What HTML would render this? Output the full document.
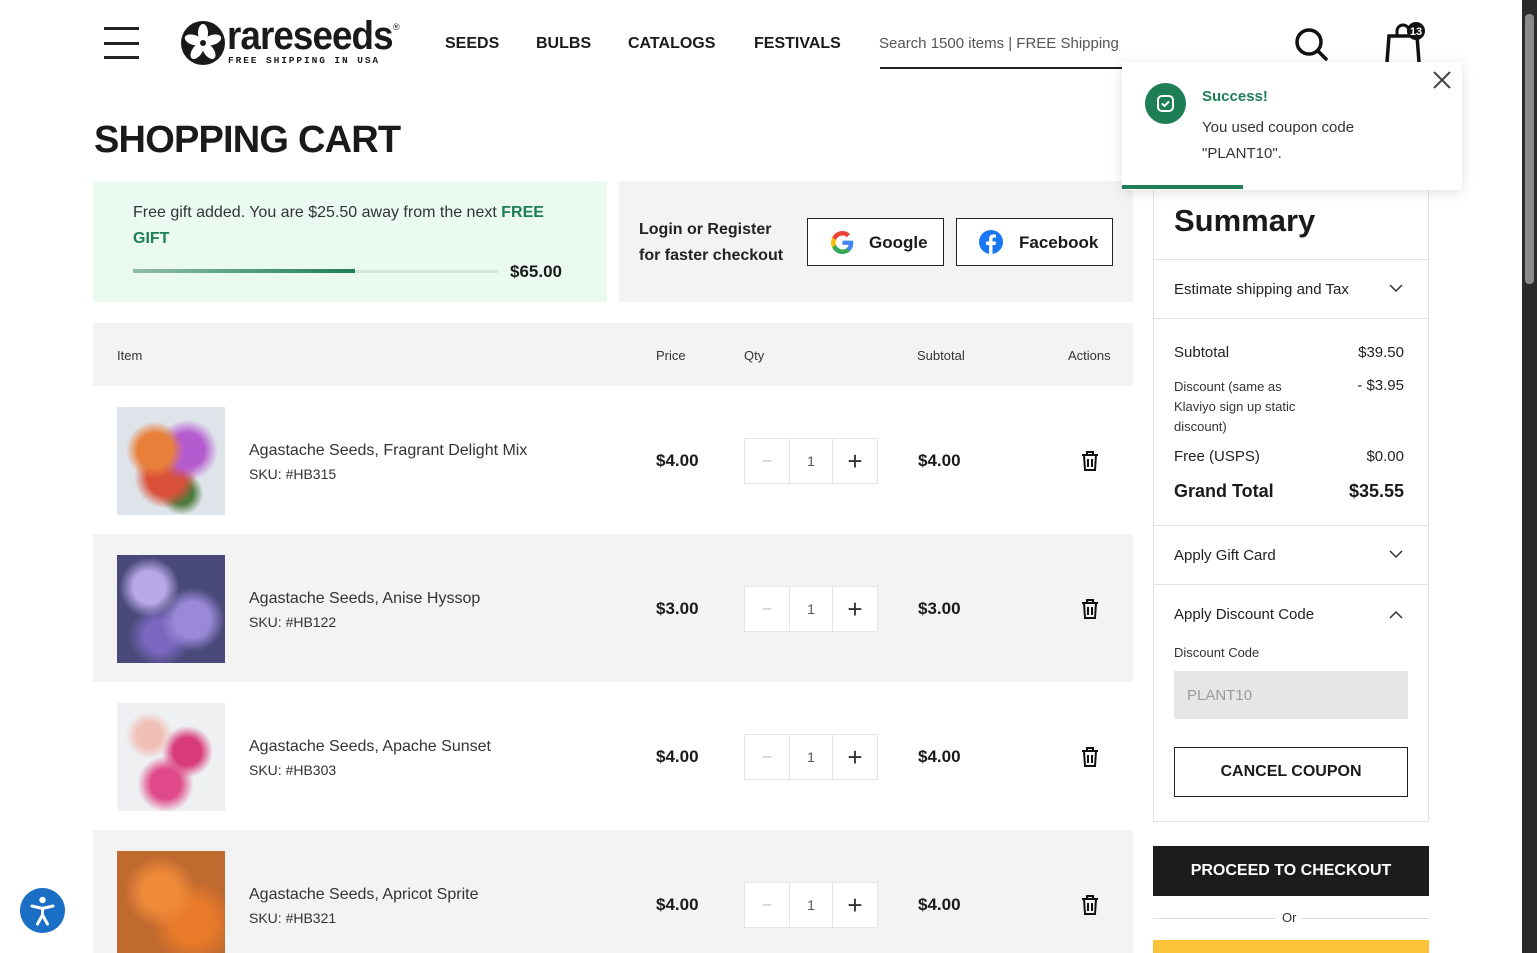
<!DOCTYPE html>
<html><head><meta charset="utf-8">
<style>
*{box-sizing:border-box;margin:0;padding:0}
body{width:1537px;height:953px;overflow:hidden;background:#fff;font-family:"Liberation Sans",sans-serif;color:#1a1a1a;position:relative}
.a{position:absolute}
.nav{font-size:16px;font-weight:bold;letter-spacing:0;top:35px}
.th{font-size:13px;color:#333;top:348px}
.row{position:absolute;left:93px;width:1040px;height:148px}
.img{position:absolute;left:24px;top:21px;width:108px;height:108px}
.name{position:absolute;left:156px;top:56px;font-size:16px;color:#333}
.sku{position:absolute;left:156px;top:80px;font-size:14px;color:#333}
.pr{position:absolute;top:65px;font-size:17px;font-weight:bold}
.qty{position:absolute;left:651px;top:52px;width:134px;height:46px;border:1px solid #e4e4e4;display:flex}
.qty div{border-right:1px solid #e4e4e4;display:flex;align-items:center;justify-content:center;color:#bbb}
.qty div:last-child{border:none;color:#333;font-size:26px;font-weight:300}
.trash{position:absolute;left:987px;top:64px}
.sl{font-size:15px;color:#222}
.sr{font-size:15px;color:#222;right:133px}
.hr{position:absolute;left:1154px;width:274px;height:1px;background:#e2e2e2}
</style></head><body>
<div class="a" style="left:104px;top:27px;width:35px;height:3px;background:#222"></div>
<div class="a" style="left:104px;top:42px;width:35px;height:3px;background:#222"></div>
<div class="a" style="left:104px;top:56px;width:35px;height:3px;background:#222"></div>
<svg class="a" style="left:181px;top:21px" width="44" height="44" viewBox="0 0 44 44"><circle cx="22" cy="22" r="22" fill="#1a1a1a"/><g fill="#fff"><ellipse cx="22" cy="12" rx="5" ry="9"/><ellipse cx="22" cy="12" rx="5" ry="9" transform="rotate(72 22 22)"/><ellipse cx="22" cy="12" rx="5" ry="9" transform="rotate(144 22 22)"/><ellipse cx="22" cy="12" rx="5" ry="9" transform="rotate(216 22 22)"/><ellipse cx="22" cy="12" rx="5" ry="9" transform="rotate(288 22 22)"/></g><circle cx="22" cy="22" r="3" fill="#1a1a1a"/></svg>
<div class="a" style="left:227px;top:14px;font-size:40px;font-weight:bold;letter-spacing:-1px;transform:scaleX(.92);transform-origin:left;color:#1a1a1a">rareseeds</div>
<div class="a" style="left:393px;top:22px;font-size:9px">®</div>
<div class="a" style="left:228px;top:55px;font-size:9.5px;font-weight:bold;letter-spacing:1.9px;font-family:'Liberation Mono',monospace">FREE SHIPPING IN USA</div>
<div class="a nav" style="left:445px">SEEDS</div>
<div class="a nav" style="left:536px">BULBS</div>
<div class="a nav" style="left:628px">CATALOGS</div>
<div class="a nav" style="left:754px">FESTIVALS</div>
<div class="a" style="left:879px;top:35px;font-size:15px;color:#555">Search 1500 items | FREE Shipping</div>
<div class="a" style="left:880px;top:67px;width:242px;height:2px;background:#222"></div>
<svg class="a" style="left:1293px;top:26px" width="36" height="36" viewBox="0 0 36 36"><circle cx="16" cy="16" r="12" fill="none" stroke="#111" stroke-width="3.5"/><path d="M25 25l8 8" stroke="#111" stroke-width="3.5" stroke-linecap="round"/></svg>
<svg class="a" style="left:1383px;top:20px" width="46" height="44" viewBox="0 0 46 44"><path d="M4 42 L6 16 H34 L36 42" fill="none" stroke="#111" stroke-width="3.5"/><path d="M14 16 V11 a6 6 0 0 1 12 0 V16" fill="none" stroke="#111" stroke-width="3"/><circle cx="33" cy="11" r="9" fill="#111"/><text x="33" y="15" font-size="11" font-weight="bold" fill="#fff" text-anchor="middle" font-family="Liberation Sans">13</text></svg>
<div class="a" style="left:94px;top:119px;font-size:38px;font-weight:bold;letter-spacing:-.8px">SHOPPING CART</div>
<div class="a" style="left:93px;top:181px;width:514px;height:121px;background:#eafaf0"></div>
<div class="a" style="left:133px;top:200px;width:440px;font-size:16px;line-height:26px;color:#333">Free gift added. You are $25.50 away from the next <b style="color:#1e7e55">FREE GIFT</b></div>
<div class="a" style="left:133px;top:270px;width:365px;height:3px;background:#d6e6dc"></div>
<div class="a" style="left:133px;top:269px;width:222px;height:4px;background:linear-gradient(90deg,#8fbfa8,#1e7e55)"></div>
<div class="a" style="left:510px;top:262px;font-size:17px;font-weight:bold">$65.00</div>
<div class="a" style="left:619px;top:181px;width:514px;height:121px;background:#f3f3f3"></div>
<div class="a" style="left:639px;top:217px;font-size:16px;font-weight:bold;line-height:26px;color:#222">Login or Register<br>for faster checkout</div>
<div class="a" style="left:807px;top:218px;width:137px;height:48px;border:1.5px solid #222;background:#fff"></div>
<svg class="a" style="left:831px;top:231px" width="23" height="23" viewBox="0 0 48 48"><path fill="#EA4335" d="M24 9.5c3.5 0 6.6 1.2 9 3.5l6.7-6.7C35.6 2.4 30.2 0 24 0 14.6 0 6.6 5.4 2.6 13.2l7.8 6C12.3 13.4 17.7 9.5 24 9.5z"/><path fill="#4285F4" d="M46.5 24.5c0-1.6-.1-3.1-.4-4.5H24v9h12.7c-.6 3-2.3 5.5-4.8 7.2l7.6 5.9c4.4-4.1 7-10.1 7-17.6z"/><path fill="#FBBC05" d="M10.4 28.8c-.5-1.5-.8-3.1-.8-4.8s.3-3.3.8-4.8l-7.8-6C.9 16.5 0 20.1 0 24s.9 7.5 2.6 10.8l7.8-6z"/><path fill="#34A853" d="M24 48c6.5 0 11.9-2.1 15.9-5.9l-7.6-5.9c-2.2 1.5-5 2.3-8.3 2.3-6.3 0-11.7-4.2-13.6-10l-7.8 6C6.6 42.6 14.6 48 24 48z"/></svg>
<div class="a" style="left:869px;top:233px;font-size:17px;font-weight:bold">Google</div>
<div class="a" style="left:956px;top:218px;width:157px;height:48px;border:1.5px solid #222;background:#fff"></div>
<svg class="a" style="left:979px;top:230px" width="24" height="24" viewBox="0 0 24 24"><circle cx="12" cy="12" r="12" fill="#1877F2"/><path d="M13.5 24V15h3l.5-3.5h-3.5V9.3c0-1 .3-1.7 1.8-1.7H17V4.5c-.3 0-1.4-.1-2.6-.1-2.6 0-4.3 1.6-4.3 4.4v2.7H7V15h3.1v9z" fill="#fff"/></svg>
<div class="a" style="left:1019px;top:233px;font-size:17px;font-weight:bold">Facebook</div>
<div class="a" style="left:93px;top:323px;width:1040px;height:63px;background:#f3f3f3"></div>
<div class="a th" style="left:117px">Item</div>
<div class="a th" style="left:656px">Price</div>
<div class="a th" style="left:744px">Qty</div>
<div class="a th" style="left:917px">Subtotal</div>
<div class="a th" style="left:1068px">Actions</div>
<div class="row" style="top:386px;background:#fff">
<div class="img" style="background:radial-gradient(circle at 35% 40%,#e8803a 0 18%,transparent 30%),radial-gradient(circle at 65% 40%,#b55bd0 0 18%,transparent 32%),radial-gradient(circle at 45% 65%,#d9503a 0 20%,transparent 34%),radial-gradient(circle at 60% 80%,#4a7a3a 0 10%,transparent 20%),#dfe3ea"></div>
<div class="name">Agastache Seeds, Fragrant Delight Mix</div><div class="sku">SKU: #HB315</div>
<div class="pr" style="left:563px">$4.00</div>
<div class="qty"><div style="width:45px">–</div><div style="width:43px;color:#555;font-size:14px">1</div><div style="width:44px">+</div></div>
<div class="pr" style="left:825px">$4.00</div>
<svg class="trash" width="20" height="22" viewBox="0 0 20 22"><path d="M2 5h16M7 5V2h6v3M4 5l1 15h10l1-15M8 9v8M12 9v8" fill="none" stroke="#111" stroke-width="2"/></svg>
</div>
<div class="row" style="top:534px;background:#f3f3f3">
<div class="img" style="background:radial-gradient(circle at 30% 30%,#b8a8e8 0 15%,transparent 28%),radial-gradient(circle at 70% 60%,#9a88d8 0 18%,transparent 32%),radial-gradient(circle at 40% 75%,#7a68c0 0 15%,transparent 30%),#4a4a7a"></div>
<div class="name">Agastache Seeds, Anise Hyssop</div><div class="sku">SKU: #HB122</div>
<div class="pr" style="left:563px">$3.00</div>
<div class="qty" style="background:#fff"><div style="width:45px">–</div><div style="width:43px;color:#555;font-size:14px">1</div><div style="width:44px">+</div></div>
<div class="pr" style="left:825px">$3.00</div>
<svg class="trash" width="20" height="22" viewBox="0 0 20 22"><path d="M2 5h16M7 5V2h6v3M4 5l1 15h10l1-15M8 9v8M12 9v8" fill="none" stroke="#111" stroke-width="2"/></svg>
</div>
<div class="row" style="top:682px;background:#fff">
<div class="img" style="background:radial-gradient(circle at 30% 30%,#f0c0b8 0 12%,transparent 22%),radial-gradient(circle at 65% 45%,#d83a7a 0 15%,transparent 28%),radial-gradient(circle at 45% 75%,#e04a8a 0 15%,transparent 28%),#eef0f2"></div>
<div class="name">Agastache Seeds, Apache Sunset</div><div class="sku">SKU: #HB303</div>
<div class="pr" style="left:563px">$4.00</div>
<div class="qty"><div style="width:45px">–</div><div style="width:43px;color:#555;font-size:14px">1</div><div style="width:44px">+</div></div>
<div class="pr" style="left:825px">$4.00</div>
<svg class="trash" width="20" height="22" viewBox="0 0 20 22"><path d="M2 5h16M7 5V2h6v3M4 5l1 15h10l1-15M8 9v8M12 9v8" fill="none" stroke="#111" stroke-width="2"/></svg>
</div>
<div class="row" style="top:830px;background:#f3f3f3;height:123px">
<div class="img" style="height:102px;background:radial-gradient(circle at 40% 40%,#f08a3a 0 20%,transparent 40%),radial-gradient(circle at 70% 70%,#e87a2a 0 20%,transparent 40%),#c06a30"></div>
<div class="name">Agastache Seeds, Apricot Sprite</div><div class="sku">SKU: #HB321</div>
<div class="pr" style="left:563px">$4.00</div>
<div class="qty" style="background:#fff"><div style="width:45px">–</div><div style="width:43px;color:#555;font-size:14px">1</div><div style="width:44px">+</div></div>
<div class="pr" style="left:825px">$4.00</div>
<svg class="trash" width="20" height="22" viewBox="0 0 20 22"><path d="M2 5h16M7 5V2h6v3M4 5l1 15h10l1-15M8 9v8M12 9v8" fill="none" stroke="#111" stroke-width="2"/></svg>
</div>
<div class="a" style="left:1153px;top:186px;width:276px;height:636px;border:1px solid #e2e2e2"></div>
<div class="a" style="left:1174px;top:203px;font-size:31px;font-weight:bold">Summary</div>
<div class="hr" style="top:259px"></div>
<div class="a sl" style="left:1174px;top:281px">Estimate shipping and Tax</div>
<svg class="a" style="left:1389px;top:283px" width="14" height="10"><path d="M1 2l6 6 6-6" fill="none" stroke="#333" stroke-width="1.5"/></svg>
<div class="hr" style="top:318px"></div>
<div class="a sl" style="left:1174px;top:344px">Subtotal</div><div class="a sr" style="top:344px">$39.50</div>
<div class="a" style="left:1174px;top:377px;font-size:13px;line-height:20px;color:#333;width:140px">Discount (same as Klaviyo sign up static discount)</div>
<div class="a sr" style="top:377px">- $3.95</div>
<div class="a sl" style="left:1174px;top:448px">Free (USPS)</div><div class="a sr" style="top:448px">$0.00</div>
<div class="a" style="left:1174px;top:481px;font-size:18px;font-weight:bold">Grand Total</div><div class="a" style="right:133px;top:481px;font-size:18px;font-weight:bold">$35.55</div>
<div class="hr" style="top:525px"></div>
<div class="a sl" style="left:1174px;top:547px">Apply Gift Card</div>
<svg class="a" style="left:1389px;top:549px" width="14" height="10"><path d="M1 2l6 6 6-6" fill="none" stroke="#333" stroke-width="1.5"/></svg>
<div class="hr" style="top:584px"></div>
<div class="a sl" style="left:1174px;top:606px">Apply Discount Code</div>
<svg class="a" style="left:1389px;top:610px" width="14" height="10"><path d="M1 8l6-6 6 6" fill="none" stroke="#333" stroke-width="1.5"/></svg>
<div class="a" style="left:1174px;top:645px;font-size:13px;color:#333">Discount Code</div>
<div class="a" style="left:1174px;top:671px;width:234px;height:48px;background:#e6e6e6"></div>
<div class="a" style="left:1187px;top:687px;font-size:15px;color:#999">PLANT10</div>
<div class="a" style="left:1174px;top:747px;width:234px;height:50px;border:1.5px solid #222;display:flex;align-items:center;justify-content:center;font-size:16px;font-weight:bold">CANCEL COUPON</div>
<div class="a" style="left:1153px;top:846px;width:276px;height:50px;background:#1c1c1c;color:#fff;display:flex;align-items:center;justify-content:center;font-size:16px;font-weight:bold">PROCEED TO CHECKOUT</div>
<div class="a" style="left:1153px;top:918px;width:276px;height:1px;background:#ddd"></div>
<div class="a" style="left:1276px;top:910px;background:#fff;padding:0 6px;font-size:13px;color:#333">Or</div>
<div class="a" style="left:1153px;top:940px;width:276px;height:13px;background:#fcc23a"></div>
<div class="a" style="left:1122px;top:62px;width:340px;height:128px;background:#fff;box-shadow:0 2px 12px rgba(0,0,0,.12)"></div>
<div class="a" style="left:1122px;top:185px;width:121px;height:4px;background:#1e7e55"></div>
<svg class="a" style="left:1145px;top:83px" width="41" height="41" viewBox="0 0 41 41"><circle cx="20.5" cy="20.5" r="20.5" fill="#1e7e55"/><rect x="13" y="13" width="15" height="15" rx="4" fill="none" stroke="#fff" stroke-width="2"/><path d="M17 20.5l2.5 2.5 4.5-4.5" fill="none" stroke="#fff" stroke-width="2"/></svg>
<div class="a" style="left:1202px;top:88px;font-size:15px;font-weight:bold;color:#1e7e55">Success!</div>
<div class="a" style="left:1202px;top:115px;font-size:15px;line-height:26px;color:#333">You used coupon code<br>"PLANT10".</div>
<svg class="a" style="left:1432px;top:70px" width="20" height="20"><path d="M2 2l16 16M18 2L2 18" stroke="#444" stroke-width="2"/></svg>
<svg class="a" style="left:20px;top:888px" width="45" height="45" viewBox="0 0 45 45"><circle cx="22.5" cy="22.5" r="22.5" fill="#1a6fc4"/><circle cx="22.5" cy="12" r="3.2" fill="#fff"/><path d="M12 18l10.5 2.5L33 18M22.5 20v7l-5 9M22.5 27l5 9" fill="none" stroke="#fff" stroke-width="3" stroke-linecap="round"/></svg>
<div class="a" style="left:1522px;top:0;width:15px;height:953px;background:#2b2b2b"></div>
<div class="a" style="left:1525px;top:14px;width:9px;height:270px;background:#8a8a8a;border-radius:4px"></div>
</body></html>
